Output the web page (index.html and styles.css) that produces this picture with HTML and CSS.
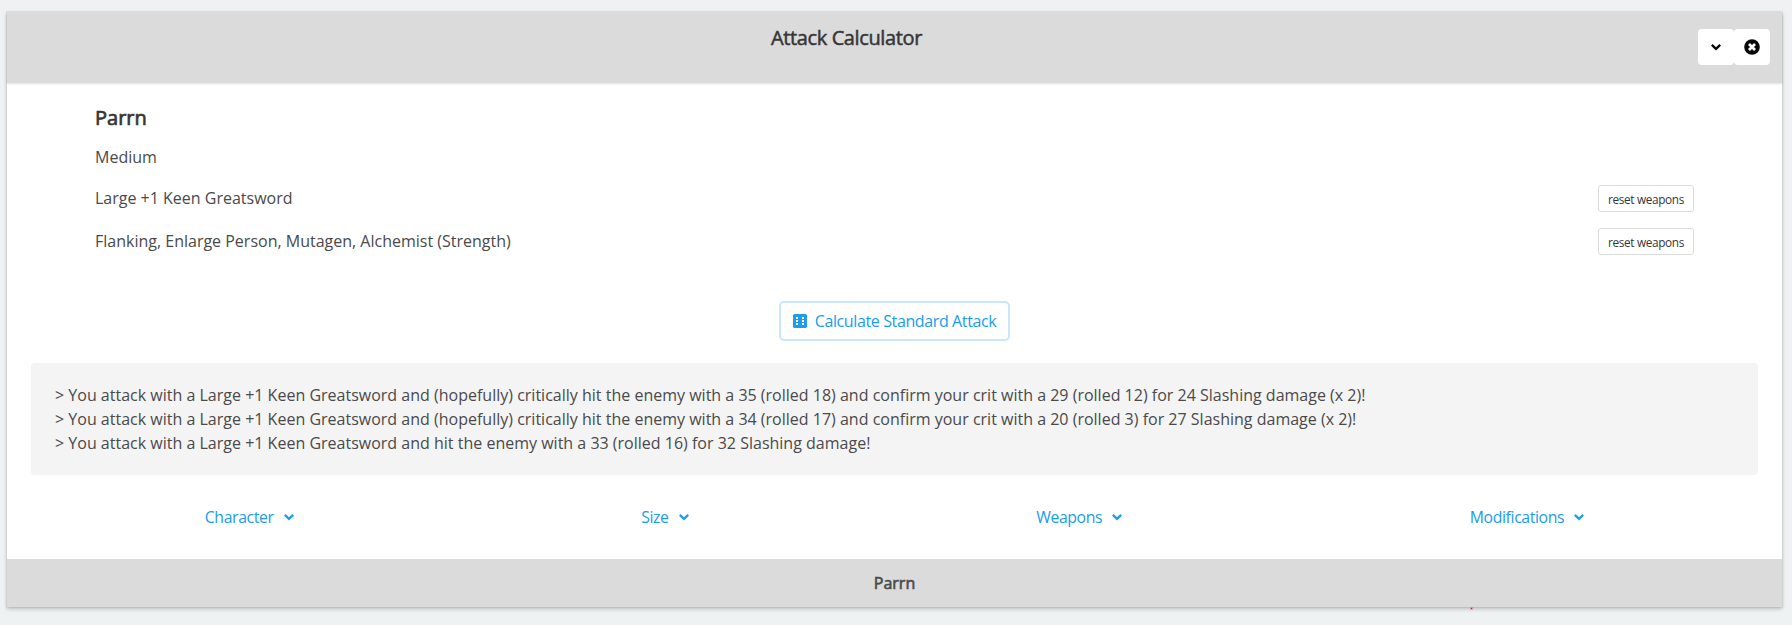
FILE: index.html
```html
<!DOCTYPE html>
<html lang="en">
<head>
<meta charset="utf-8">
<title>Attack Calculator</title>
<link rel="stylesheet" href="styles.css">
</head>
<body>
<svg class="defs" aria-hidden="true">
  <symbol id="chevron" viewBox="0 0 10 8"><path d="M.8 1.8 L5 5.8 L9.2 1.8" fill="none" stroke="currentColor" stroke-width="2.4"/></symbol>
</svg>
<main class="card">
  <header class="card-header">
    <h1 class="title"><span class="t">Attack Calculator</span></h1>
    <div class="actions">
      <button class="icon-btn" aria-label="Collapse"><svg class="chev"><use href="#chevron"/></svg></button>
      <button class="icon-btn" aria-label="Close"><svg class="close" viewBox="0 0 16 16"><circle cx="8" cy="8" r="7.8" fill="#0a0a0a"/><path d="M5 5 L11 11 M11 5 L5 11" stroke="#fff" stroke-width="2.8"/></svg></button>
    </div>
  </header>
  <section class="content">
    <div class="summary">
      <h2 class="name"><span class="t">Parrn</span></h2>
      <p class="size"><span class="t">Medium</span></p>
      <div class="row"><p class="detail"><span class="t">Large +1 Keen Greatsword</span></p><button class="reset"><span class="t">reset weapons</span></button></div>
      <div class="row"><p class="detail"><span class="t">Flanking, Enlarge Person, Mutagen, Alchemist (Strength)</span></p><button class="reset"><span class="t">reset weapons</span></button></div>
    </div>
    <button class="calculate">
      <svg class="dice" viewBox="0 0 14 14"><rect width="14" height="14" rx="1.6" fill="currentColor"/><path d="M3 3h2v2H3zM3 6h2v2H3zM3 9h2v2H3zM9 3h2v2H9zM9 6h2v2H9zM9 9h2v2H9z" fill="#fff"/></svg>
      <span class="t">Calculate Standard Attack</span>
    </button>
    <div class="log">
      <p><span class="t">&gt; You attack with a Large +1 Keen Greatsword and (hopefully) critically hit the enemy with a 35 (rolled 18) and confirm your crit with a 29 (rolled 12) for 24 Slashing damage (x 2)!</span></p>
      <p><span class="t">&gt; You attack with a Large +1 Keen Greatsword and (hopefully) critically hit the enemy with a 34 (rolled 17) and confirm your crit with a 20 (rolled 3) for 27 Slashing damage (x 2)!</span></p>
      <p><span class="t">&gt; You attack with a Large +1 Keen Greatsword and hit the enemy with a 33 (rolled 16) for 32 Slashing damage!</span></p>
    </div>
    <nav class="menus">
      <a class="menu"><span class="t">Character</span><svg class="chev"><use href="#chevron"/></svg></a>
      <a class="menu"><span class="t">Size</span><svg class="chev"><use href="#chevron"/></svg></a>
      <a class="menu"><span class="t">Weapons</span><svg class="chev"><use href="#chevron"/></svg></a>
      <a class="menu"><span class="t">Modifications</span><svg class="chev"><use href="#chevron"/></svg></a>
    </nav>
  </section>
  <footer class="footer"><span class="t">Parrn</span></footer>
  <i class="speck"></i>
</main>
</body>
</html>
```
FILE: styles.css
```css
* { box-sizing: border-box; }
body { margin: 0; padding: 12px 10px 18px 7px; background: #eef2f3; color: #4a4a4a; font: 16px/24px "Open Sans", sans-serif; overflow: hidden; }
h1, h2, p { margin: 0; }
button { font-family: inherit; background: #fff; padding: 0; }
svg { display: block; }
.defs { display: none; }
.card { position: relative; background: #fff; box-shadow: 0 2px 4px rgba(10,10,10,.22), 0 0 1px 1px rgba(10,10,10,.05); }
.card-header { display: flex; gap: 12px; height: 71px; padding-right: 12px; background: #dbdbdb; box-shadow: 0 1px 2px rgba(10,10,10,.12); }
.title { flex: 1; padding-top: 12px; text-align: center; font-size: 20px; line-height: 27px; font-weight: 400; letter-spacing: -.38px; color: #363636; -webkit-text-stroke: .5px; }
.actions { display: flex; padding-top: 17px; }
.icon-btn { width: 36px; height: 36px; border: 0; border-radius: 4px; color: #0a0a0a; display: grid; place-items: center; }
.chev { width: 10px; height: 8px; }
.close { width: 16px; height: 16px; }
.content { height: 476px; padding: 20px 24px 0; }
.summary { padding: 0 64px; }
.name { height: 30px; font-size: 20px; line-height: 30px; font-weight: 400; color: #363636; -webkit-text-stroke: .7px; }
.size { padding-top: 12px; height: 52px; }
.row { display: flex; justify-content: space-between; align-items: flex-start; height: 43px; }
.detail { padding-top: 1px; }
.reset { width: 96px; height: 27px; border: 1px solid #dbdbdb; border-radius: 3px; font-size: 11.8px; letter-spacing: -.35px; line-height: 24px; color: #363636; }
.calculate { display: flex; align-items: center; justify-content: center; gap: 8px; width: 231px; height: 40px; margin: 30px auto 22px; border: 2px solid #c8e6fd; border-radius: 5px; color: #209cee; font-size: 16px; letter-spacing: -.38px; }
.dice { width: 14px; height: 14px; }
.log { height: 112px; padding: 20px 24px; background: #f4f4f4; border-radius: 4px; }
.log p { letter-spacing: .005px; }
.menus { display: flex; justify-content: space-around; padding-top: 30px; color: #209cee; font-size: 15.8px; letter-spacing: -.38px; }
.menu { display: flex; align-items: center; gap: 10px; }
.footer { height: 48px; line-height: 48px; background: #dbdbdb; text-align: center; -webkit-text-stroke: .6px; }
.speck { position: absolute; left: 1464px; bottom: -2px; width: 1px; height: 1px; background: #f00; box-shadow: 0 0 1px 1px rgba(255,0,0,.25); }
```
